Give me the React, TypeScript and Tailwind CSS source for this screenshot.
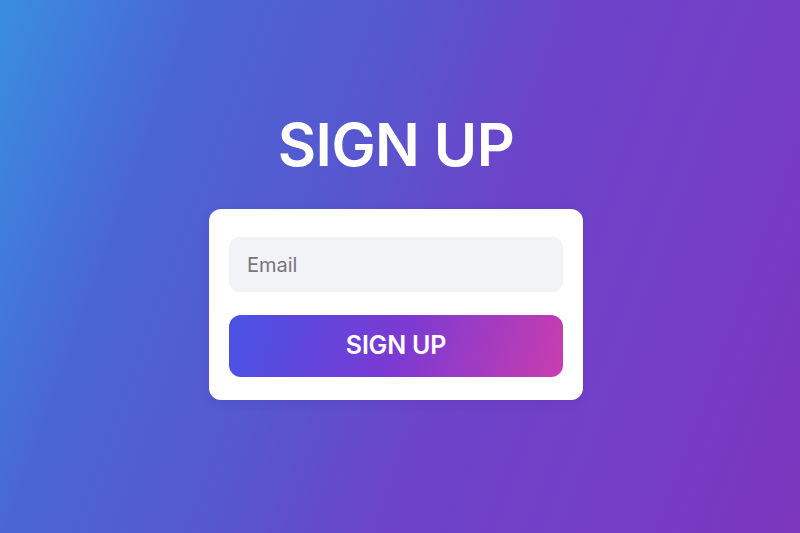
export default function App() {
  return (
    <div
      className="w-[800px] h-[533px] flex flex-col items-center justify-center pr-[8px] pb-[18px] bg-[linear-gradient(110deg,#3a8ee0_0%,#4a66d5_20%,#5658cf_40%,#6c44c9_58%,#7340c8_75%,#7c35bd_100%)]"
      style={{ fontFamily: "Inter, 'Noto Sans', sans-serif" }}
    >
      <h1 className="text-[59px] leading-none font-semibold text-white tracking-[-0.5px] mb-[35px]">
        SIGN UP
      </h1>
      <div className="w-[374px] bg-white rounded-[12px] px-[20px] pt-[28px] pb-[23px] flex flex-col gap-[23px] shadow-[0_3px_10px_rgba(40,20,120,0.1)]">
        <input
          type="email"
          placeholder="Email"
          className="w-full h-[55px] rounded-[10px] bg-[#f2f3f6] px-[18px] text-[20px] text-gray-800 placeholder:text-[#7a7479] outline-none"
        />
        <button className="w-full h-[62px] rounded-[12px] bg-[linear-gradient(105deg,#4852e4_0%,#7a3ad3_50%,#c93dae_100%)] text-white text-[25px] font-semibold tracking-[-0.2px]">
          SIGN UP
        </button>
      </div>
    </div>
  );
}
